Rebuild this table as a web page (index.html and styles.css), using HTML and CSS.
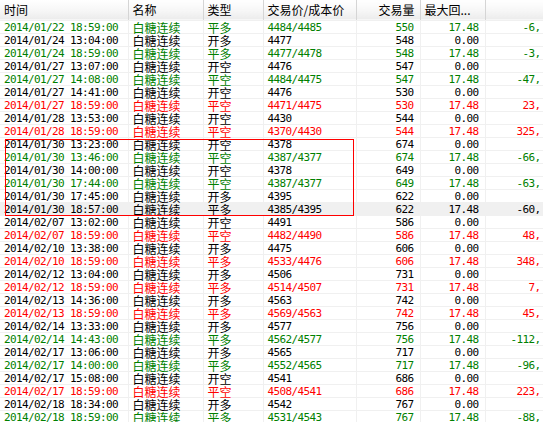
FILE: index.html
```html
<!DOCTYPE html>
<html>
<head>
<meta charset="utf-8">
<link rel="stylesheet" href="styles.css">
</head>
<body>
<div class="wrap">
<table class="grid">
<colgroup>
<col class="c1"><col class="c2"><col class="c3"><col class="c4"><col class="c5"><col class="c6"><col class="c7">
</colgroup>
<thead>
<tr><th>时间</th><th>名称</th><th>类型</th><th>交易价/成本价</th><th class="r">交易量</th><th>最大回...</th><th class="last"></th></tr>
</thead>
<tbody>
<tr class="g"><td class="n">2014/01/22 18:59:00</td><td>白糖连续</td><td>平多</td><td class="n">4484/4485</td><td class="n r">550</td><td class="n r">17.48</td><td class="n r">-6,</td></tr>
<tr><td class="n">2014/01/24 13:04:00</td><td>白糖连续</td><td>开多</td><td class="n">4477</td><td class="n r">548</td><td class="n r">0.00</td><td class="n r"></td></tr>
<tr class="g"><td class="n">2014/01/24 18:59:00</td><td>白糖连续</td><td>平多</td><td class="n">4477/4478</td><td class="n r">548</td><td class="n r">17.48</td><td class="n r">-3,</td></tr>
<tr><td class="n">2014/01/27 13:07:00</td><td>白糖连续</td><td>开空</td><td class="n">4476</td><td class="n r">547</td><td class="n r">0.00</td><td class="n r"></td></tr>
<tr class="g"><td class="n">2014/01/27 14:08:00</td><td>白糖连续</td><td>平空</td><td class="n">4484/4475</td><td class="n r">547</td><td class="n r">17.48</td><td class="n r">-47,</td></tr>
<tr><td class="n">2014/01/27 14:41:00</td><td>白糖连续</td><td>开空</td><td class="n">4476</td><td class="n r">530</td><td class="n r">0.00</td><td class="n r"></td></tr>
<tr class="rd"><td class="n">2014/01/27 18:59:00</td><td>白糖连续</td><td>平空</td><td class="n">4471/4475</td><td class="n r">530</td><td class="n r">17.48</td><td class="n r">23,</td></tr>
<tr><td class="n">2014/01/28 13:53:00</td><td>白糖连续</td><td>开空</td><td class="n">4430</td><td class="n r">544</td><td class="n r">0.00</td><td class="n r"></td></tr>
<tr class="rd"><td class="n">2014/01/28 18:59:00</td><td>白糖连续</td><td>平空</td><td class="n">4370/4430</td><td class="n r">544</td><td class="n r">17.48</td><td class="n r">325,</td></tr>
<tr><td class="n">2014/01/30 13:23:00</td><td>白糖连续</td><td>开空</td><td class="n">4378</td><td class="n r">674</td><td class="n r">0.00</td><td class="n r"></td></tr>
<tr class="g"><td class="n">2014/01/30 13:46:00</td><td>白糖连续</td><td>平空</td><td class="n">4387/4377</td><td class="n r">674</td><td class="n r">17.48</td><td class="n r">-66,</td></tr>
<tr><td class="n">2014/01/30 14:00:00</td><td>白糖连续</td><td>开空</td><td class="n">4378</td><td class="n r">649</td><td class="n r">0.00</td><td class="n r"></td></tr>
<tr class="g"><td class="n">2014/01/30 17:44:00</td><td>白糖连续</td><td>平空</td><td class="n">4387/4377</td><td class="n r">649</td><td class="n r">17.48</td><td class="n r">-63,</td></tr>
<tr><td class="n">2014/01/30 17:45:00</td><td>白糖连续</td><td>开多</td><td class="n">4395</td><td class="n r">622</td><td class="n r">0.00</td><td class="n r"></td></tr>
<tr class="sel"><td class="n">2014/01/30 18:57:00</td><td>白糖连续</td><td>平多</td><td class="n">4385/4395</td><td class="n r">622</td><td class="n r">17.48</td><td class="n r">-60,</td></tr>
<tr><td class="n">2014/02/07 13:02:00</td><td>白糖连续</td><td>开空</td><td class="n">4491</td><td class="n r">586</td><td class="n r">0.00</td><td class="n r"></td></tr>
<tr class="rd"><td class="n">2014/02/07 18:59:00</td><td>白糖连续</td><td>平空</td><td class="n">4482/4490</td><td class="n r">586</td><td class="n r">17.48</td><td class="n r">48,</td></tr>
<tr><td class="n">2014/02/10 13:38:00</td><td>白糖连续</td><td>开多</td><td class="n">4475</td><td class="n r">606</td><td class="n r">0.00</td><td class="n r"></td></tr>
<tr class="rd"><td class="n">2014/02/10 18:59:00</td><td>白糖连续</td><td>平多</td><td class="n">4533/4476</td><td class="n r">606</td><td class="n r">17.48</td><td class="n r">348,</td></tr>
<tr><td class="n">2014/02/12 13:04:00</td><td>白糖连续</td><td>开多</td><td class="n">4506</td><td class="n r">731</td><td class="n r">0.00</td><td class="n r"></td></tr>
<tr class="rd"><td class="n">2014/02/12 18:59:00</td><td>白糖连续</td><td>平多</td><td class="n">4514/4507</td><td class="n r">731</td><td class="n r">17.48</td><td class="n r">7,</td></tr>
<tr><td class="n">2014/02/13 14:36:00</td><td>白糖连续</td><td>开多</td><td class="n">4563</td><td class="n r">742</td><td class="n r">0.00</td><td class="n r"></td></tr>
<tr class="rd"><td class="n">2014/02/13 18:59:00</td><td>白糖连续</td><td>平多</td><td class="n">4569/4563</td><td class="n r">742</td><td class="n r">17.48</td><td class="n r">45,</td></tr>
<tr><td class="n">2014/02/14 13:33:00</td><td>白糖连续</td><td>开多</td><td class="n">4577</td><td class="n r">756</td><td class="n r">0.00</td><td class="n r"></td></tr>
<tr class="g"><td class="n">2014/02/14 14:43:00</td><td>白糖连续</td><td>平多</td><td class="n">4562/4577</td><td class="n r">756</td><td class="n r">17.48</td><td class="n r">-112,</td></tr>
<tr><td class="n">2014/02/17 13:06:00</td><td>白糖连续</td><td>开多</td><td class="n">4565</td><td class="n r">717</td><td class="n r">0.00</td><td class="n r"></td></tr>
<tr class="g"><td class="n">2014/02/17 14:00:00</td><td>白糖连续</td><td>平多</td><td class="n">4552/4565</td><td class="n r">717</td><td class="n r">17.48</td><td class="n r">-96,</td></tr>
<tr><td class="n">2014/02/17 15:08:00</td><td>白糖连续</td><td>开空</td><td class="n">4541</td><td class="n r">686</td><td class="n r">0.00</td><td class="n r"></td></tr>
<tr class="rd"><td class="n">2014/02/17 18:59:00</td><td>白糖连续</td><td>平空</td><td class="n">4508/4541</td><td class="n r">686</td><td class="n r">17.48</td><td class="n r">223,</td></tr>
<tr><td class="n">2014/02/18 18:34:00</td><td>白糖连续</td><td>开多</td><td class="n">4542</td><td class="n r">767</td><td class="n r">0.00</td><td class="n r"></td></tr>
<tr class="g"><td class="n">2014/02/18 18:59:00</td><td>白糖连续</td><td>平多</td><td class="n">4531/4543</td><td class="n r">767</td><td class="n r">17.48</td><td class="n r">-88,</td></tr>
</tbody>
</table>
<div class="mark"></div>
</div>
</body>
</html>
```

FILE: styles.css
```css
html, body {
  margin: 0;
  padding: 0;
  background: #ffffff;
  overflow: hidden;
}
.wrap {
  position: relative;
  width: 543px;
  height: 422px;
  overflow: hidden;
}
.grid {
  border-collapse: collapse;
  table-layout: fixed;
  width: 560px;
  font-family: "Noto Sans CJK SC", sans-serif;
  font-size: 12px;
  color: #000;
}
.c1 { width: 128px; }
.c2 { width: 75px; }
.c3 { width: 60px; }
.c4 { width: 93px; }
.c5 { width: 64px; }
.c6 { width: 65px; }
.c7 { width: 75px; }
thead th {
  height: 20px;
  padding: 0 0 0 4px;
  text-align: left;
  font-weight: normal;
  font-size: 12px;
  line-height: 19px;
  color: #000;
  background: linear-gradient(#ffffff, #f6f6f6 55%, #ececec 95%, #ffffff);
  border-right: 1px solid #d5d5d5;
  border-bottom: 1px solid #f0f0f0;
  white-space: nowrap;
  vertical-align: top;
}
thead th.r { text-align: right; padding: 0 5px 0 0; }
thead th.last { border-right: none; }
tbody td {
  height: 10px;
  padding: 2px 0 0 4px;
  line-height: 10px;
  border-right: 1px solid #f0f0f0;
  border-bottom: 1px solid #f0f0f0;
  white-space: nowrap;
  vertical-align: top;
}
td.n {
  font-family: "DejaVu Sans Mono", "Liberation Mono", monospace;
  font-size: 11px;
  letter-spacing: -0.62px;
}
td.r { text-align: right; padding-right: 6px; }
tbody td:nth-child(7) { padding-right: 19px; }
tr.g td { color: #008000; }
tr.rd td { color: #ff0000; }
tr.sel td { background: #f0f0f0; }
.mark {
  position: absolute;
  left: 5px;
  top: 139px;
  width: 347px;
  height: 75px;
  border: 1px solid #ff0000;
}
```
